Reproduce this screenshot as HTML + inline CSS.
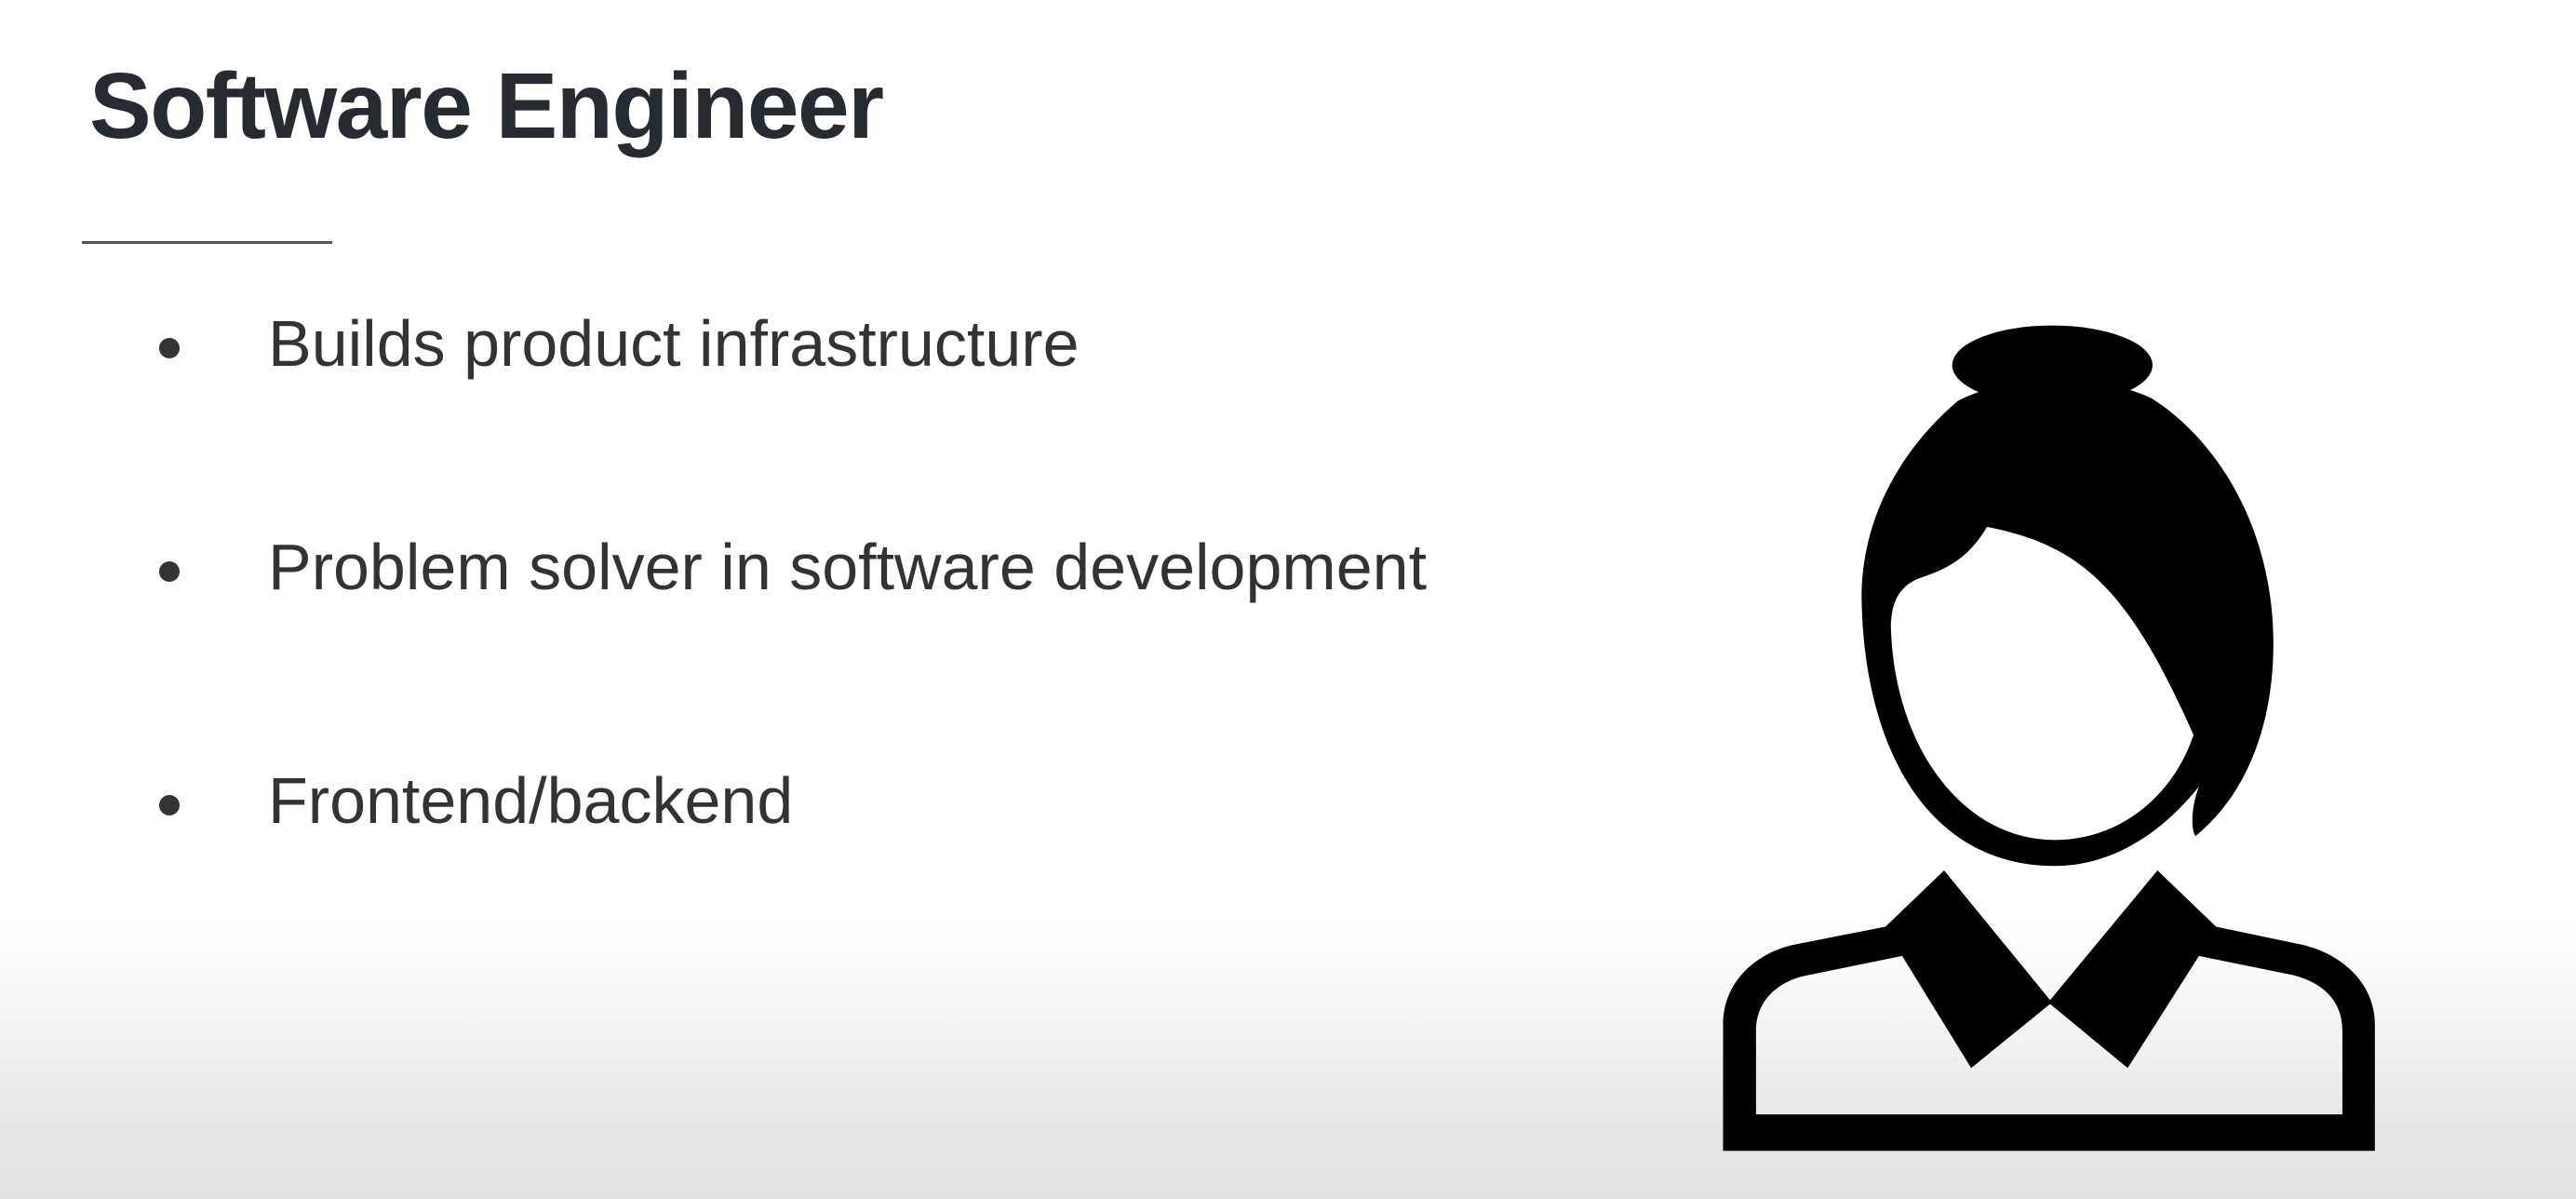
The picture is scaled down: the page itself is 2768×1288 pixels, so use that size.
<!DOCTYPE html>
<html><head><meta charset="utf-8"><style>
html,body{margin:0;padding:0}
body{width:2768px;height:1288px;position:relative;overflow:hidden;background:linear-gradient(to bottom,#fff 0,#fff 990px,#f6f6f6 1080px,#e9e9e9 1190px,#e0e0e0 1288px);font-family:"Liberation Sans",sans-serif}
.t{position:absolute;left:96px;top:64px;font-size:100px;font-weight:bold;color:#262b31;letter-spacing:-1.5px;line-height:1;margin:0}
.rule{position:absolute;left:88px;top:259px;width:269px;height:3px;background:#555}
.b{position:absolute;left:288px;font-size:70px;color:#333;line-height:1;white-space:nowrap}
.d{position:absolute;left:171px;width:22px;height:22px;border-radius:50%;background:#333}
svg{position:absolute;left:1820px;top:330px}
</style></head><body>
<h1 class="t">Software Engineer</h1>
<div class="rule"></div>
<div class="d" style="top:363px"></div><div class="b" style="top:334px">Builds product infrastructure</div>
<div class="d" style="top:603px"></div><div class="b" style="top:574px">Problem solver in software development</div>
<div class="d" style="top:854px"></div><div class="b" style="top:825px">Frontend/backend</div>
<svg width="760" height="930" viewBox="0 0 1568 1568" preserveAspectRatio="none">
<ellipse cx="795" cy="105" rx="222" ry="72" fill="#000"/>
<path fill="#000" fill-rule="evenodd" d="M585,170 C470,250 375,370 372,520 C375,800 520,1012 800,1012 C930,1012 1040,950 1120,868 C1105,900 1100,940 1112,958 C1230,880 1285,750 1285,610 C1285,400 1160,240 1015,165 C900,120 700,120 585,170 Z M650,398 C850,430 960,500 1108,775 C1060,890 940,965 800,965 C600,965 445,800 437,580 C437,530 460,500 510,488 C580,470 620,440 650,398 Z"/>
<path fill="#000" fill-rule="evenodd" d="M65,1528 L65,1300 C65,1220 140,1170 220,1155 L425,1122 L555,1020 L790,1255 L1028,1020 L1158,1122 L1350,1155 C1430,1170 1510,1220 1510,1300 L1510,1528 Z M138,1462 L138,1310 C138,1260 180,1225 240,1212 L462,1175 L615,1378 L790,1262 L962,1378 L1120,1175 L1330,1210 C1400,1225 1438,1260 1438,1310 L1438,1462 Z"/>
</svg>
</body></html>
